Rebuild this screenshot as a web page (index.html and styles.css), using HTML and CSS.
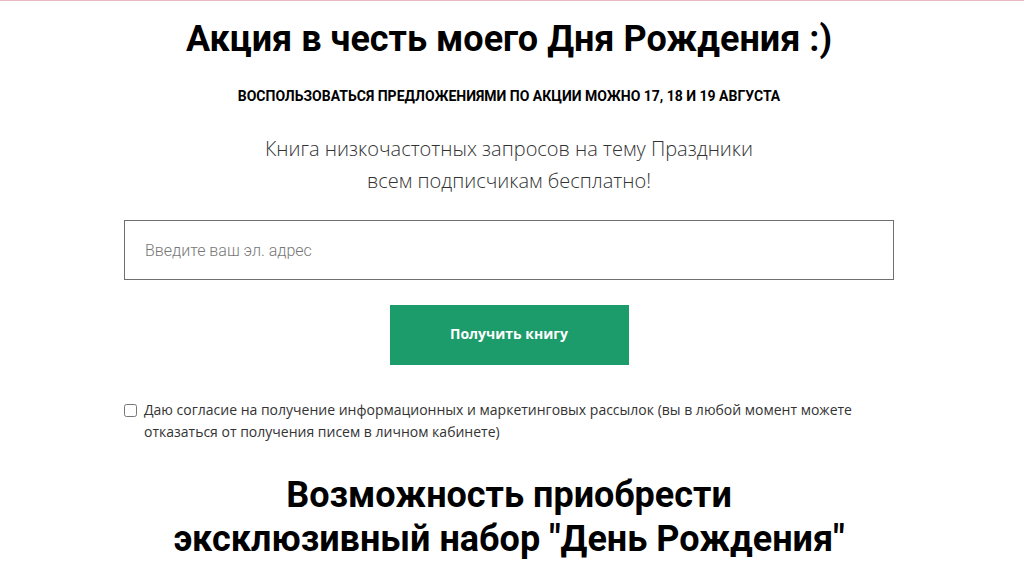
FILE: index.html
```html
<!DOCTYPE html>
<html lang="ru">
<head>
  <meta charset="UTF-8" />
  <meta name="viewport" content="width=device-width, initial-scale=1.0" />
  <title>Акция в честь моего Дня Рождения</title>
  <link rel="stylesheet" href="styles.css">
</head>
<body>
  <div class="page">
    <section class="promo">
      <h1 class="promo-title">Акция в честь моего Дня Рождения :)</h1>
      <p class="promo-dates">Воспользоваться предложениями по акции можно 17, 18 и 19 августа</p>
      <p class="promo-lead">Книга низкочастотных запросов на тему Праздники<br>всем подписчикам бесплатно!</p>

      <form class="subscribe" onsubmit="return false;">
        <input class="subscribe-input" type="email" placeholder="Введите ваш эл. адрес">
        <button class="subscribe-btn" type="submit">Получить книгу</button>
        <label class="consent">
          <input type="checkbox" class="consent-box">
          <span>Даю согласие на получение информационных и маркетинговых рассылок (вы в любой момент можете отказаться от получения писем в личном кабинете)</span>
        </label>
      </form>

      <h2 class="promo-subtitle">Возможность приобрести<br>эксклюзивный набор "День Рождения"</h2>
    </section>
  </div>
</body>
</html>
```

FILE: styles.css
```css
* {
  box-sizing: border-box;
  margin: 0;
  padding: 0;
}
body {
  font-family: 'Open Sans', sans-serif;
  background: #fff;
  color: #333;
  border-top: 1px solid #e9b9c4;
  padding-right: 6px;
}
.page {
  width: 770px;
  margin: 0 auto;
}
.promo {
  display: flex;
  flex-direction: column;
  align-items: center;
  text-align: center;
  padding-top: 16px;
}
.promo-title {
  font-family: 'Roboto', sans-serif;
  font-weight: 700;
  font-size: 36px;
  line-height: 44px;
  color: #000;
  white-space: nowrap;
}
.promo-dates {
  font-family: 'Roboto', sans-serif;
  font-weight: 700;
  font-size: 14px;
  line-height: 20px;
  text-transform: uppercase;
  color: #000;
  margin-top: 25px;
}
.promo-lead {
  font-weight: 300;
  font-size: 20px;
  line-height: 32px;
  color: #333;
  margin-top: 27px;
}
.subscribe {
  width: 100%;
  display: flex;
  flex-direction: column;
  align-items: center;
  margin-top: 23px;
}
.subscribe-input {
  width: 100%;
  height: 60px;
  border: 1px solid #6f6f6f;
  padding: 0 20px;
  font-family: 'Roboto', sans-serif;
  font-weight: 300;
  font-size: 16px;
  color: #333;
  outline: none;
}
.subscribe-input::placeholder {
  color: #777;
}
.subscribe-btn {
  width: 239px;
  height: 60px;
  margin-top: 25px;
  padding-bottom: 3px;
  background: #1c9c6a;
  color: #fff;
  border: none;
  font-family: 'Open Sans', sans-serif;
  font-weight: 700;
  font-size: 14px;
  cursor: pointer;
}
.consent {
  align-self: stretch;
  display: flex;
  align-items: flex-start;
  gap: 7px;
  margin-top: 34px;
  text-align: left;
  font-size: 14px;
  line-height: 22px;
  color: #333;
}
.consent-box {
  width: 13px;
  height: 13px;
  margin: 5px 0 0;
  flex: none;
}
.promo-subtitle {
  font-family: 'Roboto', sans-serif;
  font-weight: 700;
  font-size: 36px;
  line-height: 44px;
  color: #000;
  margin-top: 30px;
}
```
